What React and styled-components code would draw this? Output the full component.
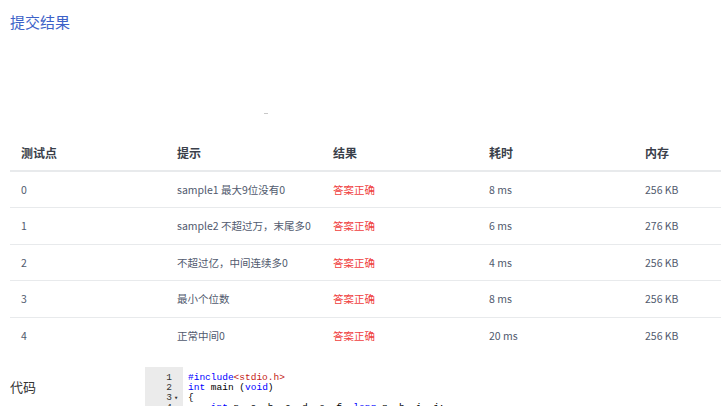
import React from "react";
import styled, { createGlobalStyle } from "styled-components";

const Global = createGlobalStyle`
  html, body { margin: 0; padding: 0; overflow: hidden; background: #fff; }
  body { font-family: "Noto Sans CJK SC", "Noto Sans", sans-serif; }
`;

const Page = styled.div`
  width: 721px;
  height: 406px;
  overflow: hidden;
  padding: 12px 0 0 10px;
  box-sizing: border-box;
`;

const Title = styled.div`
  font-size: 15px;
  line-height: 20px;
  color: #3d62c8;
`;

const Blank = styled.div`
  height: 103px;
  display: flex;
  flex-direction: column;
`;

const Dash = styled.div`
  margin: 81px 0 0 254px;
  width: 4px;
  height: 1px;
  background: #c8c8c8;
`;

const Table = styled.table`
  border-collapse: collapse;
  table-layout: fixed;
  width: 780px;
`;

const Th = styled.th`
  width: 156px;
  height: 36px;
  padding: 0 0 0 11px;
  text-align: left;
  font-size: 12px;
  font-weight: 700;
  color: #3a3f4a;
  border-bottom: 2px solid #e8eaec;
  box-sizing: border-box;
`;

const Td = styled.td`
  height: 36.5px;
  padding: 0 0 0 11px;
  font-size: 10.5px;
  color: ${(p) => (p.$ok ? "#f04040" : "#515a6e")};
  border-bottom: ${(p) => (p.$last ? "none" : "1px solid #e8eaec")};
  box-sizing: border-box;
  white-space: nowrap;
`;

const CodeSection = styled.div`
  display: flex;
  margin-top: 13px;
`;

const Label = styled.div`
  width: 135px;
  padding-top: 12px;
  font-size: 13px;
  line-height: 16px;
  color: #333;
`;

const Editor = styled.div`
  display: flex;
  font-family: "Liberation Mono", "DejaVu Sans Mono", monospace;
  font-size: 9.5px;
  line-height: 10px;
`;

const Gutter = styled.div`
  width: 38px;
  background: #ebebeb;
  padding-top: 6px;
  color: #333;
  box-sizing: border-box;
`;

const GutterLine = styled.div`
  display: flex;
  justify-content: flex-end;
  padding-right: 3px;
`;

const Fold = styled.span`
  display: inline-block;
  width: 8px;
  text-align: center;
  font-size: 7px;
`;

const Code = styled.div`
  padding: 6px 0 0 5px;
  white-space: pre;
  color: #000;
`;

const Blue = styled.span`
  color: #0000ff;
`;
const Red = styled.span`
  color: #c41a16;
`;

const rows = [
  ["0", "sample1 最大9位没有0", "8 ms", "256 KB"],
  ["1", "sample2 不超过万，末尾多0", "6 ms", "276 KB"],
  ["2", "不超过亿，中间连续多0", "4 ms", "256 KB"],
  ["3", "最小个位数", "8 ms", "256 KB"],
  ["4", "正常中间0", "20 ms", "256 KB"],
];

export default function App() {
  return (
    <>
      <Global />
      <Page>
        <Title>提交结果</Title>
        <Blank>
          <Dash />
        </Blank>
        <Table>
          <thead>
            <tr>
              <Th>测试点</Th>
              <Th>提示</Th>
              <Th>结果</Th>
              <Th>耗时</Th>
              <Th>内存</Th>
            </tr>
          </thead>
          <tbody>
            {rows.map((r, i) => (
              <tr key={r[0]}>
                <Td $last={i === rows.length - 1}>{r[0]}</Td>
                <Td $last={i === rows.length - 1}>{r[1]}</Td>
                <Td $ok $last={i === rows.length - 1}>答案正确</Td>
                <Td $last={i === rows.length - 1}>{r[2]}</Td>
                <Td $last={i === rows.length - 1}>{r[3]}</Td>
              </tr>
            ))}
          </tbody>
        </Table>
        <CodeSection>
          <Label>代码</Label>
          <Editor>
            <Gutter>
              <GutterLine>1<Fold /></GutterLine>
              <GutterLine>2<Fold /></GutterLine>
              <GutterLine>3<Fold>▾</Fold></GutterLine>
              <GutterLine>4<Fold /></GutterLine>
            </Gutter>
            <Code>
              <div><Blue>#include</Blue><Red>&lt;stdio.h&gt;</Red></div>
              <div><Blue>int</Blue> main (<Blue>void</Blue>)</div>
              <div>{"{"}</div>
              <div>{"    "}<Blue>int</Blue> n, a, b, c, d, e, f, <Blue>long</Blue> g, h, i, j;</div>
            </Code>
          </Editor>
        </CodeSection>
      </Page>
    </>
  );
}
